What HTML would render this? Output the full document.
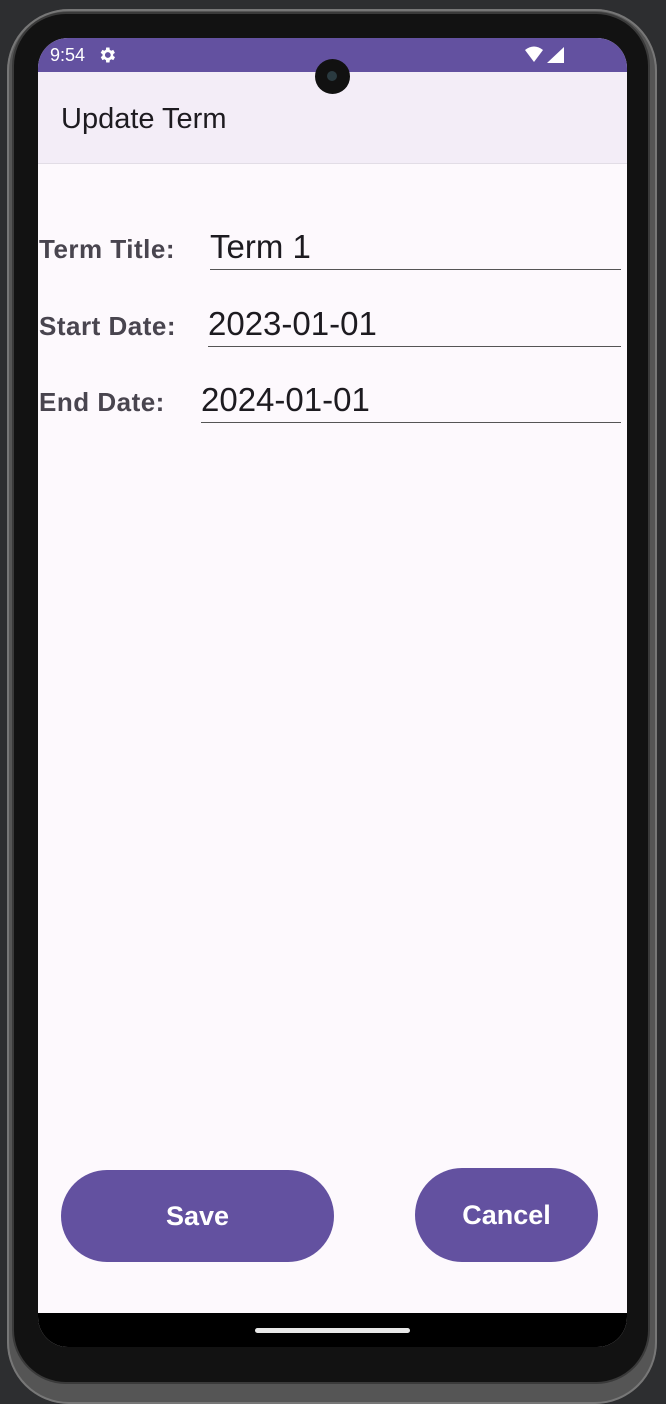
<!DOCTYPE html>
<html><head><meta charset="utf-8"><style>
body{margin:0;width:666px;height:1386px;background:#2d2e30;position:relative;overflow:hidden;font-family:"Liberation Sans",Roboto,sans-serif}
.phone{position:absolute;left:7px;top:9px;width:650px;height:1395px;border-radius:62px;background:#555;box-shadow:inset 0 0 0 2px #777}
.bezel{position:absolute;left:14px;top:14px;width:634px;height:1368px;border-radius:52px;background:#121212;box-shadow:0 0 0 2px #3a3a3a}
.screen{position:absolute;left:38px;top:38px;width:589px;height:1309px;border-radius:30px;overflow:hidden;background:#fdf9fd}
.status{position:absolute;left:0;top:0;width:589px;height:34px;background:#6351a0;color:#fff;font-size:18px}
.appbar{position:absolute;left:0;top:34px;width:589px;height:91px;background:#f3edf7;border-bottom:1px solid #e2dde6}
.appbar span{position:absolute;left:23px;top:31px;font-size:29px;color:#1d1b20}
.lbl{position:absolute;left:1px;font-size:26px;font-weight:bold;color:#49454f;letter-spacing:0.5px}
.val{position:absolute;font-size:33px;color:#1d1b20;border-bottom:1.5px solid #555;right:6px;height:44px;padding-top:2px;box-sizing:border-box}
.btn{position:absolute;background:#6351a0;color:#fff;font-size:27px;font-weight:bold;display:flex;align-items:center;justify-content:center;border-radius:50px}
.nav{position:absolute;left:0;top:1275px;width:589px;height:34px;background:#000}
.nav div{position:absolute;left:217px;top:15px;width:155px;height:5px;border-radius:3px;background:#e8e8e8}
</style></head><body>
<div class="phone"></div><div class="bezel"></div>
<div class="screen">
 <div class="status"><span style="position:absolute;left:12px;top:7px">9:54</span>
  <svg style="position:absolute;left:59px;top:7px" width="20" height="20" viewBox="0 0 24 24"><path fill="#fff" d="M19.4 13a7.5 7.5 0 000-2l2.1-1.6-2-3.5-2.5 1a7.5 7.5 0 00-1.7-1L15 3h-4l-.4 2.9a7.5 7.5 0 00-1.7 1l-2.5-1-2 3.5L6.6 11a7.5 7.5 0 000 2l-2.1 1.6 2 3.5 2.5-1a7.5 7.5 0 001.7 1L11 21h4l.4-2.9a7.5 7.5 0 001.7-1l2.5 1 2-3.5zM13 15.5a3.5 3.5 0 110-7 3.5 3.5 0 010 7z"/></svg>
  <svg style="position:absolute;left:486px;top:7px" width="44" height="20" viewBox="0 0 44 20"><path fill="#fff" d="M1 5Q10-2 19 5L10 17z"/><path fill="#fff" d="M40 2V18H23z"/></svg>
 </div>
 <div class="appbar"><span>Update Term</span></div>
 <div class="lbl" style="top:196px">Term Title:</div>
 <div class="val" style="left:172px;top:188px">Term 1</div>
 <div class="lbl" style="top:273px">Start Date:</div>
 <div class="val" style="left:170px;top:265px">2023-01-01</div>
 <div class="lbl" style="top:349px">End Date:</div>
 <div class="val" style="left:163px;top:341px">2024-01-01</div>
 <div class="btn" style="left:23px;top:1132px;width:273px;height:92px">Save</div>
 <div class="btn" style="left:377px;top:1130px;width:183px;height:94px">Cancel</div>
 <div class="nav"><div></div></div>
</div>
<div style="position:absolute;left:315px;top:59px;width:35px;height:35px;border-radius:50%;background:#111"><div style="position:absolute;left:12px;top:12px;width:10px;height:10px;border-radius:50%;background:#2a3a40"></div></div>
</body></html>
